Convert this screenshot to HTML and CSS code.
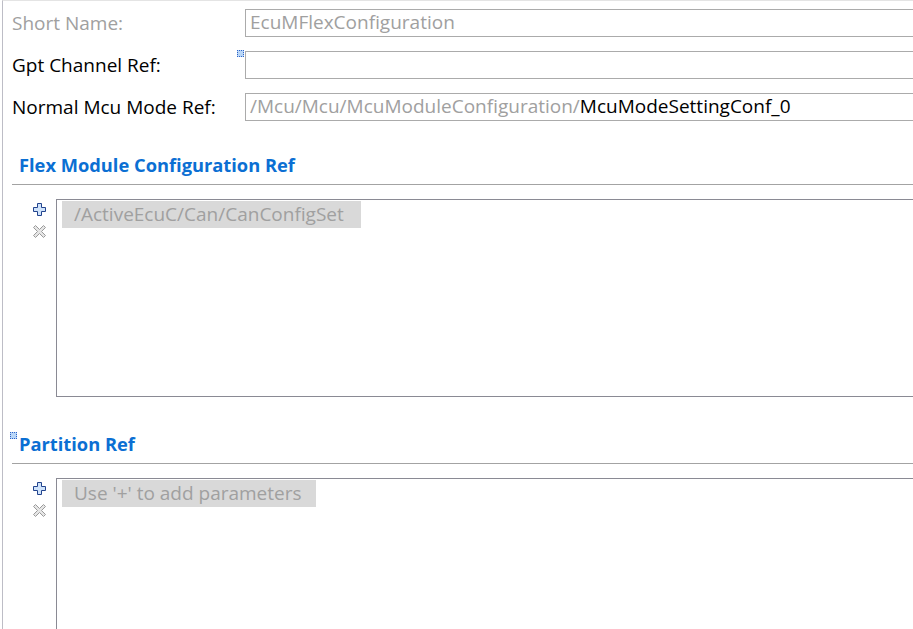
FILE: index.html
```html
<!DOCTYPE html>
<html lang="en">

<head>
    <meta charset="UTF-8">
    <meta name="viewport" content="width=device-width, initial-scale=1.0">
    <title>EcuMFlexConfiguration</title>

    <link rel="stylesheet" href="styles.css">
</head>

<body>

    <div id="editor">
        <div class="form">
            <div class="row">
                <span class="label dim">Short Name:</span>
                <div class="field"><span class="dim">EcuMFlexConfiguration</span></div>
            </div>
            <div class="row">
                <span class="label">Gpt Channel Ref:</span>
                <div class="field"><i class="mark"></i></div>
            </div>
            <div class="row">
                <span class="label">Normal Mcu Mode Ref:</span>
                <div class="field"><span class="dim">/Mcu/Mcu/McuModuleConfiguration/</span>McuModeSettingConf_0</div>
            </div>
        </div>

        <div class="ref ref-flex">
            <h2>Flex Module Configuration Ref</h2>
            <div class="list-area">
                <div class="tools">
                    <svg class="btn" width="13" height="13" viewBox="0 0 13 13">
                        <path d="M4.5 0.5h4v4h4v4h-4v4h-4v-4h-4v-4h4z" fill="#cfe3fb" stroke="#23448e" />
                    </svg>
                    <svg class="btn" width="13" height="13" viewBox="0 0 13 13">
                        <path d="M2.5 0.5l4 4 4-4 2 2-4 4 4 4-2 2-4-4-4 4-2-2 4-4-4-4z" fill="#e6e6e6" stroke="#9a9a9a" />
                    </svg>
                </div>
                <div class="list">
                    <div class="item wide">/ActiveEcuC/Can/CanConfigSet</div>
                </div>
            </div>
        </div>

        <div class="ref ref-part">
            <h2><i class="mark"></i>Partition Ref</h2>
            <div class="list-area">
                <div class="tools">
                    <svg class="btn" width="13" height="13" viewBox="0 0 13 13">
                        <path d="M4.5 0.5h4v4h4v4h-4v4h-4v-4h-4v-4h4z" fill="#cfe3fb" stroke="#23448e" />
                    </svg>
                    <svg class="btn" width="13" height="13" viewBox="0 0 13 13">
                        <path d="M2.5 0.5l4 4 4-4 2 2-4 4 4 4-2 2-4-4-4 4-2-2 4-4-4-4z" fill="#e6e6e6" stroke="#9a9a9a" />
                    </svg>
                </div>
                <div class="list">
                    <div class="item">Use '+' to add parameters</div>
                </div>
            </div>
        </div>
    </div>

</body>

</html>
```

FILE: styles.css
```css
* {
    margin: 0;
    padding: 0;
    box-sizing: border-box;
}

html,
body {
    overflow: hidden;
    background: #fff;
}

body {
    font-family: "Open Sans", "Noto Sans", sans-serif;
    font-size: 19px;
    color: #000;
}

#editor {
    width: 940px;
    height: 629px;
    overflow: hidden;
    margin-left: 2px;
    border-left: 1px solid #bdbdc6;
    border-top: 1px solid #e4e4e4;
}

.dim {
    color: #a0a0a0;
}

/* simple fields */
.form {
    padding-top: 8px;
}

.row {
    display: flex;
    align-items: center;
    height: 28px;
    margin-bottom: 14px;
}

.label {
    width: 242px;
    padding-left: 9px;
    white-space: nowrap;
}

.field {
    position: relative;
    flex: 1;
    height: 28px;
    border: 1px solid #ababab;
    padding-left: 4px;
    line-height: 25px;
    white-space: nowrap;
}

.mark {
    display: inline-block;
    width: 7px;
    height: 7px;
    border: 1px dotted #2f64c8;
    background: #b9d6f7;
}

.field .mark {
    position: absolute;
    left: -9px;
    top: -2px;
}

/* reference sections */
.ref {
    padding-left: 9px;
}

.ref-flex {
    margin-top: 32px;
}

.ref-part {
    margin-top: 35px;
}

.ref h2 {
    position: relative;
    font-size: 18.3px;
    font-weight: bold;
    color: #0b6fd3;
    line-height: 24px;
    padding-left: 7px;
    padding-bottom: 7px;
    border-bottom: 1px solid #a3a3a3;
}

.ref h2 .mark {
    position: absolute;
    left: -2px;
    top: 0;
}

.list-area {
    display: flex;
    margin-top: 14px;
    padding-left: 21px;
}

.tools {
    width: 23px;
    display: flex;
    flex-direction: column;
    gap: 9px;
    padding-top: 4px;
}

.list {
    flex: 1;
    height: 198px;
    border: 1px solid #8a8a94;
    padding: 1px 5px;
}

.ref-part .list {
    height: 200px;
}

.item {
    width: 254px;
    height: 27px;
    line-height: 27px;
    padding-left: 12px;
    background: #d9d9d9;
    color: #a0a0a0;
    white-space: nowrap;
}

.item.wide {
    width: 299px;
}
```
